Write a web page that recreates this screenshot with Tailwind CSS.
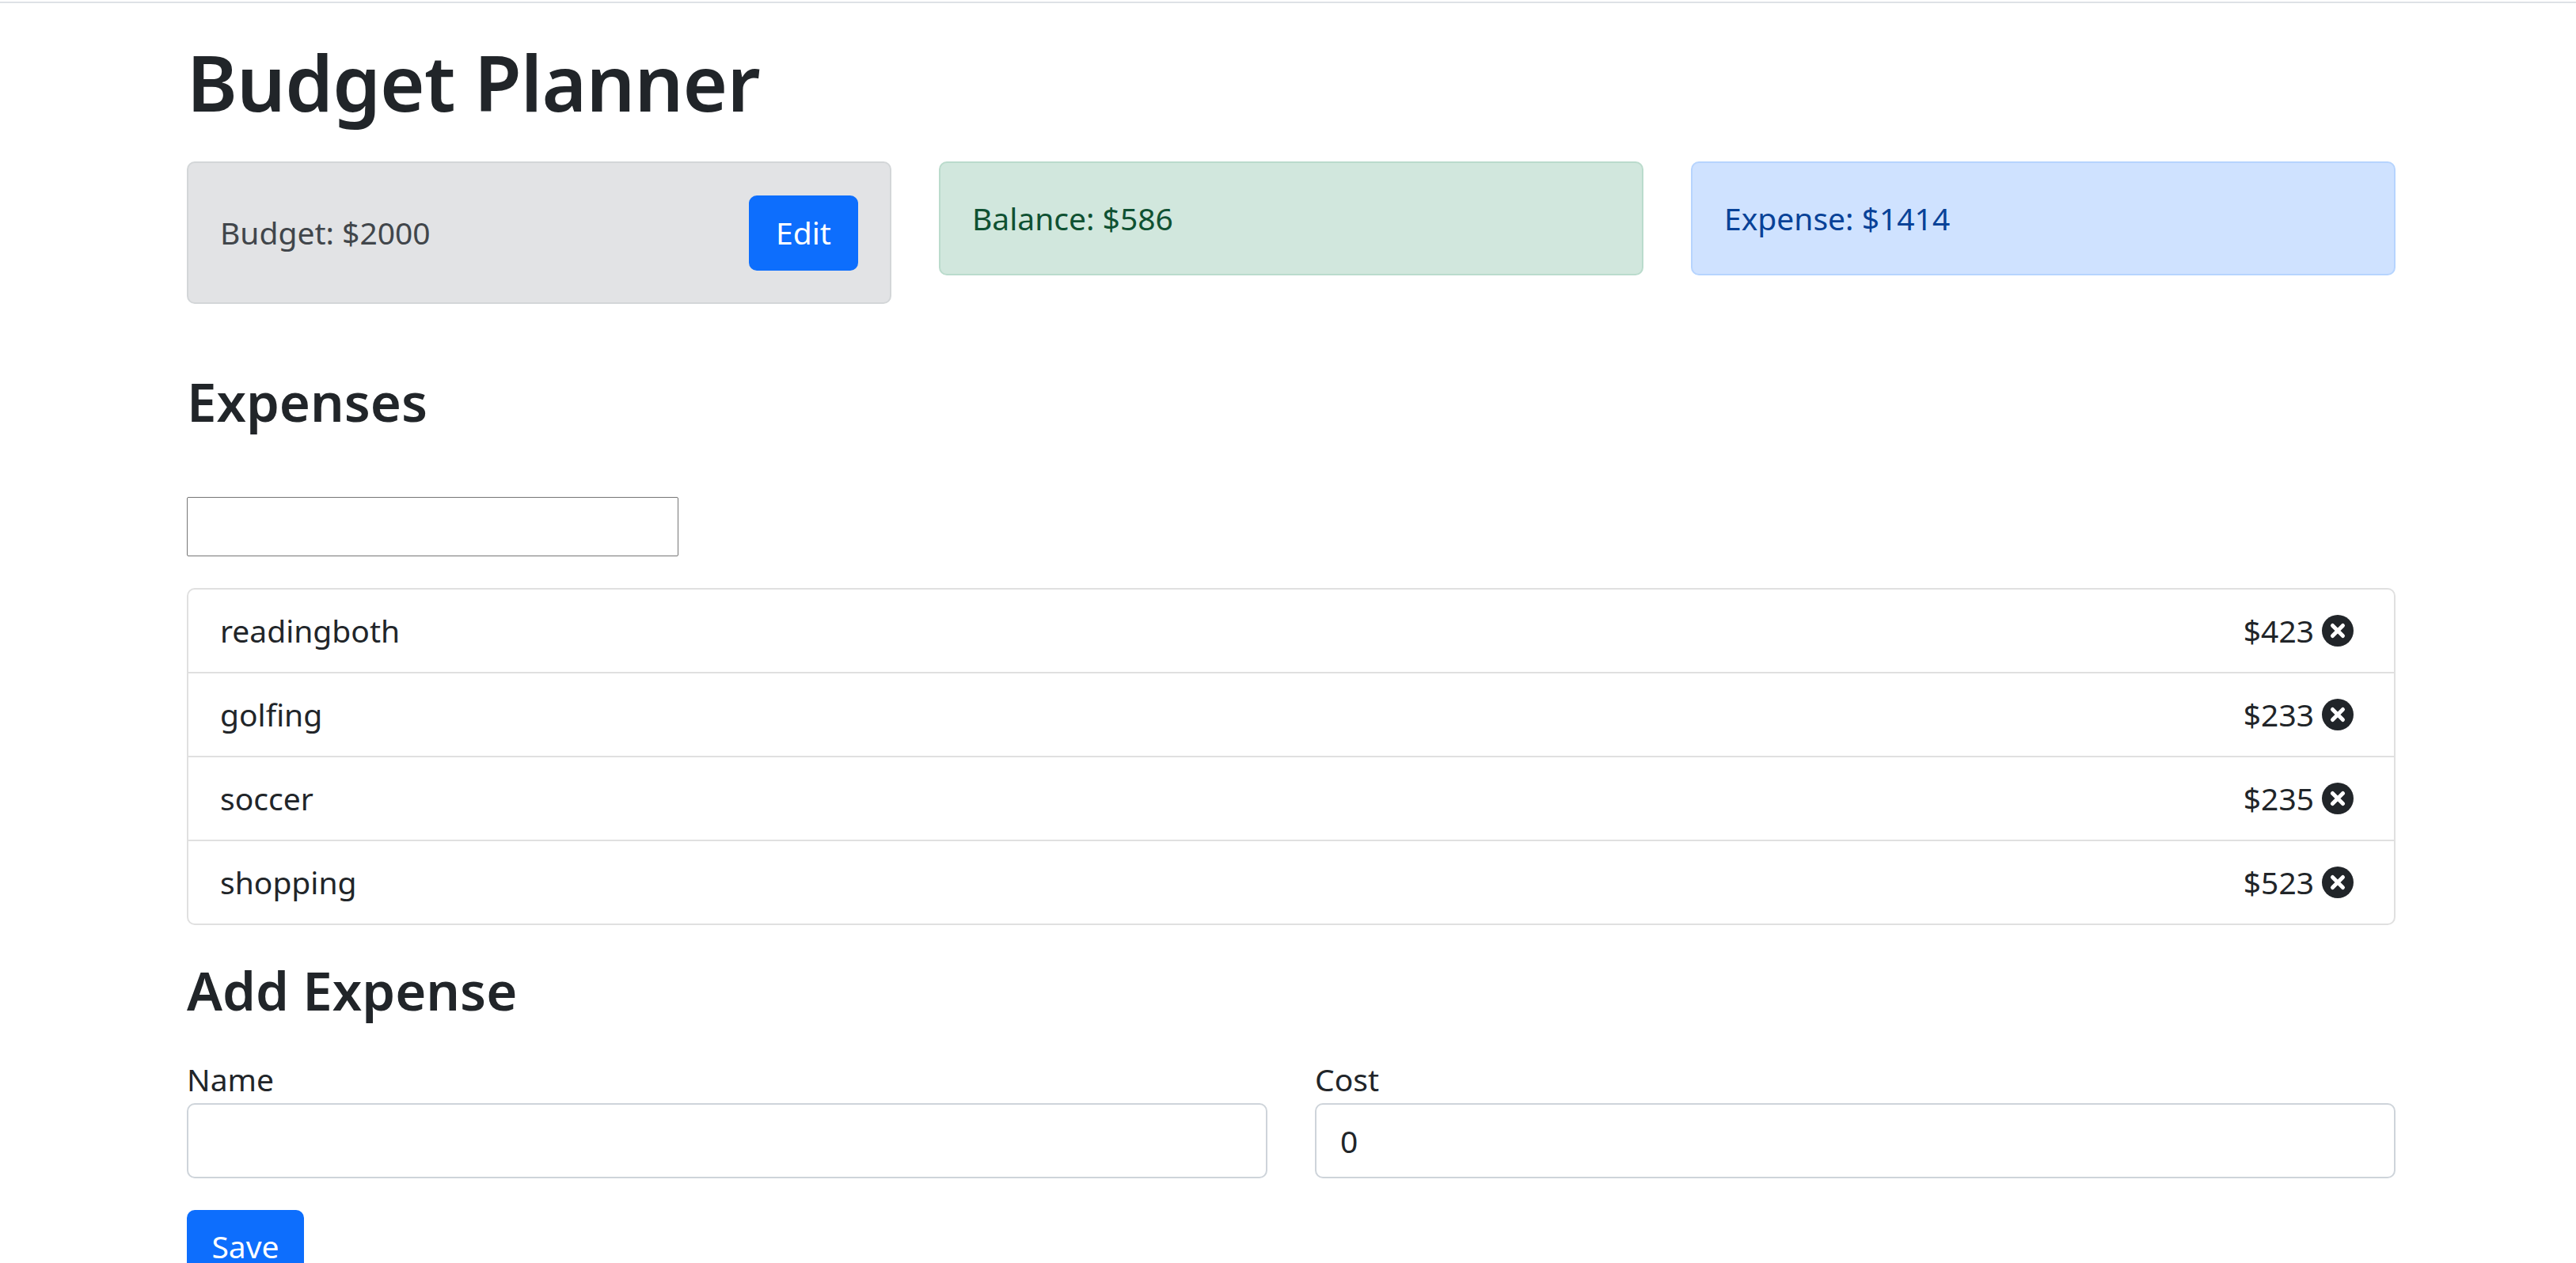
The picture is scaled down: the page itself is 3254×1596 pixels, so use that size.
<!DOCTYPE html>
<html lang="en">
<head>
    <meta charset="UTF-8">
    <title>Budget Planner</title>
    <script src="https://cdn.jsdelivr.net/npm/@tailwindcss/browser@4"></script>
</head>
<body class="bg-white font-['Noto_Sans',sans-serif] text-[39px] leading-[60px] text-[#212529]">
    <div class="border-t-2 border-[#dee2e6] mt-[2px]"></div>
    <div class="mx-[236px] w-[2790px] overflow-hidden h-[1592px]">
        <h1 class="text-[97px] leading-[120px] font-semibold tracking-[-0.8px] mt-[39px] mb-[41px]">Budget Planner</h1>

        <div class="grid grid-cols-3 gap-[60px] items-start">
            <div class="flex items-center justify-between h-[180px] px-[40px] bg-[#e2e3e5] border-2 border-[#d3d6d8] rounded-[10px] text-[#41464b]">
                <span>Budget: $2000</span>
                <button class="h-[95px] w-[138px] bg-[#0d6efd] text-white rounded-[10px]">Edit</button>
            </div>
            <div class="flex items-center h-[144px] px-[40px] bg-[#d1e7dd] border-2 border-[#badbcc] rounded-[10px] text-[#0f5132]">Balance: $586</div>
            <div class="flex items-center h-[144px] px-[40px] bg-[#cfe2ff] border-2 border-[#b6d4fe] rounded-[10px] text-[#084298]">Expense: $1414</div>
        </div>

        <h3 class="text-[67px] leading-[84px] font-semibold mt-[81px]">Expenses</h3>
        <input type="text" class="block mt-[79px] w-[621px] h-[75px] border border-[#767676] rounded-[2px] bg-white">

        <ul class="mt-[40px] border-2 border-[#e0e0e0] rounded-[10px]">
            <li class="flex justify-between items-center h-[106px] px-[40px] border-b-2 border-[#e0e0e0]">
                <span>readingboth</span>
                <span class="flex items-center gap-[10px] mr-[11px]">$423
                    <svg class="w-[40px] h-[40px]" viewBox="0 0 16 16"><circle cx="8" cy="8" r="8" fill="#212529"/><path d="M5.4 5.4l5.2 5.2M10.6 5.4l-5.2 5.2" stroke="#fff" stroke-width="2" stroke-linecap="round"/></svg>
                </span>
            </li>
            <li class="flex justify-between items-center h-[106px] px-[40px] border-b-2 border-[#e0e0e0]">
                <span>golfing</span>
                <span class="flex items-center gap-[10px] mr-[11px]">$233
                    <svg class="w-[40px] h-[40px]" viewBox="0 0 16 16"><circle cx="8" cy="8" r="8" fill="#212529"/><path d="M5.4 5.4l5.2 5.2M10.6 5.4l-5.2 5.2" stroke="#fff" stroke-width="2" stroke-linecap="round"/></svg>
                </span>
            </li>
            <li class="flex justify-between items-center h-[106px] px-[40px] border-b-2 border-[#e0e0e0]">
                <span>soccer</span>
                <span class="flex items-center gap-[10px] mr-[11px]">$235
                    <svg class="w-[40px] h-[40px]" viewBox="0 0 16 16"><circle cx="8" cy="8" r="8" fill="#212529"/><path d="M5.4 5.4l5.2 5.2M10.6 5.4l-5.2 5.2" stroke="#fff" stroke-width="2" stroke-linecap="round"/></svg>
                </span>
            </li>
            <li class="flex justify-between items-center h-[104px] px-[40px]">
                <span>shopping</span>
                <span class="flex items-center gap-[10px] mr-[11px]">$523
                    <svg class="w-[40px] h-[40px]" viewBox="0 0 16 16"><circle cx="8" cy="8" r="8" fill="#212529"/><path d="M5.4 5.4l5.2 5.2M10.6 5.4l-5.2 5.2" stroke="#fff" stroke-width="2" stroke-linecap="round"/></svg>
                </span>
            </li>
        </ul>

        <h3 class="text-[67px] leading-[84px] font-semibold mt-[40px]">Add Expense</h3>
        <div class="grid grid-cols-2 gap-[60px] mt-[37px]">
            <div>
                <label class="block pt-[4px]">Name</label>
                <input type="text" class="block w-full h-[95px] px-[30px] border-2 border-[#ced4da] rounded-[10px] bg-white">
            </div>
            <div>
                <label class="block pt-[4px]">Cost</label>
                <input type="text" value="0" class="block w-full h-[95px] px-[30px] border-2 border-[#ced4da] rounded-[10px] bg-white">
            </div>
        </div>
        <button class="block mt-[40px] h-[68px] w-[148px] pt-[23px] leading-[44px] bg-[#0d6efd] text-white rounded-t-[10px]">Save</button>
    </div>
</body>
</html>
